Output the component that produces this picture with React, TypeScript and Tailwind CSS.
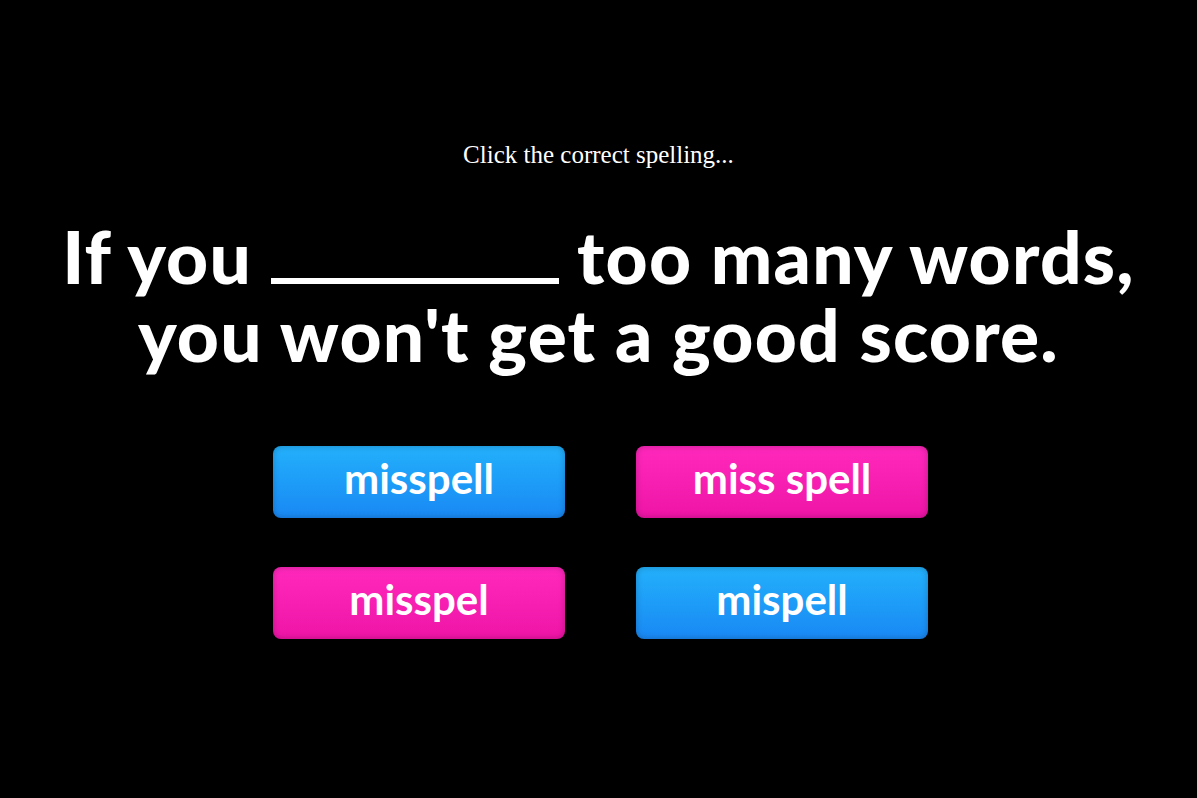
const choices = [
  { label: 'misspell', tone: 'blue' },
  { label: 'miss spell', tone: 'pink' },
  { label: 'misspel', tone: 'pink' },
  { label: 'mispell', tone: 'blue' },
] as const

const toneClass = {
  blue: 'bg-gradient-to-b from-[#24b0fb] to-[#1a88f4]',
  pink: 'bg-gradient-to-b from-[#ff28bc] to-[#ee14a6]',
}

function ChoiceButton({ label, tone }: { label: string; tone: 'blue' | 'pink' }) {
  return (
    <button
      className={`h-[72px] w-[292px] rounded-lg pb-2 text-[42px] font-bold leading-none text-white shadow-[inset_0_0_6px_rgba(0,0,0,0.25)] ${toneClass[tone]}`}
      style={{ fontFamily: 'Lato, "Open Sans", sans-serif' }}
    >
      {label}
    </button>
  )
}

export default function App() {
  return (
    <div className="flex min-h-[798px] w-full flex-col items-center bg-black pt-[139px] text-white">
      <p
        className="text-[25px] leading-8 text-white"
        style={{ fontFamily: '"Liberation Serif", serif' }}
      >
        Click the correct spelling...
      </p>

      <h1
        className="mt-[46px] text-center text-[73px] font-black leading-[78px] tracking-[1.2px]"
        style={{ fontFamily: 'Lato, "Open Sans", sans-serif' }}
      >
        If you{' '}
        <span className="inline-block h-[6px] w-[288px] bg-white align-baseline" /> too
        many words,
        <br />
        you won't get a good score.
      </h1>

      <div className="ml-[4px] mt-[73px] grid grid-cols-2 gap-x-[71px] gap-y-[49px]">
        {choices.map((c) => (
          <ChoiceButton key={c.label} label={c.label} tone={c.tone} />
        ))}
      </div>
    </div>
  )
}
